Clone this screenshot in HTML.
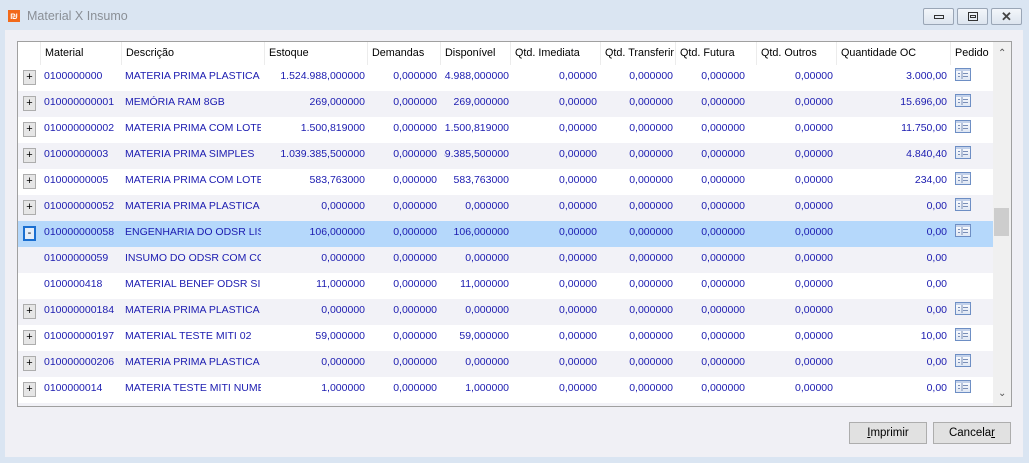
<!DOCTYPE html>
<html><head><meta charset="utf-8"><style>
*{box-sizing:border-box;margin:0;padding:0}
body{width:1029px;height:463px;background:#dae5f2;font-family:"Liberation Sans",sans-serif;font-size:11px;position:relative;overflow:hidden}
.title{position:absolute;left:27px;top:9px;color:#8a8f96;font-size:12.5px}
.logo{position:absolute;left:8px;top:10px;width:12px;height:12px;background:#f26a1b;color:#fff;font-size:9px;line-height:12px;text-align:center;font-weight:bold}
.wb{position:absolute;top:8px;width:31px;height:17px;border:1px solid #9aa6b6;border-radius:2px;background:linear-gradient(#f3f6fa,#dde5ef)}
.client{position:absolute;left:5px;top:30px;width:1018px;height:427px;background:#f0f0f5}
.grid{position:absolute;left:17px;top:41px;width:995px;height:366px;border:1px solid #a0a0a0;background:#fff;overflow:hidden}
.hd{position:absolute;top:0;height:23px;line-height:22px;color:#000;padding-left:4px;border-left:1px solid #ececec;white-space:nowrap;font-size:10.8px}
.row{position:absolute;left:0;width:975px;height:26px}
.c{position:absolute;top:0;height:26px;line-height:23px;color:#1b1bb0;white-space:nowrap;overflow:hidden;font-size:10.5px}
.r{display:flex;justify-content:flex-end}
.pb{position:absolute;left:5px;top:5px;width:13px;height:15px;background:#e6e6e6;border:1px solid #adadad;color:#000;text-align:center;line-height:12px;font-size:11px}
.ic{position:absolute;left:937px;top:3px}
.sb{position:absolute;left:975px;top:0;width:19px;height:364px;background:#f0f0f0}
.btn{position:absolute;top:422px;width:78px;height:22px;border:1px solid #adadad;background:#e1e1e1;text-align:center;line-height:20px;font-size:11.5px}
</style></head><body>
<div class="logo">₪</div><div class="title">Material X Insumo</div>
<div class="wb" style="left:923px"><div style="position:absolute;left:10px;top:6px;width:10px;height:4px;border:1px solid #333"></div></div>
<div class="wb" style="left:957px"><div style="position:absolute;left:10px;top:3px;width:10px;height:9px;border:1px solid #333"></div><div style="position:absolute;left:12px;top:6px;width:6px;height:3px;border:1px solid #333"></div></div>
<div class="wb" style="left:991px;text-align:center;line-height:15px;font-size:13px;font-weight:bold;color:#444">✕</div>
<div class="client"></div>
<div class="grid">
<div class="hd" style="left:22px">Material</div>
<div class="hd" style="left:103px">Descrição</div>
<div class="hd" style="left:246px">Estoque</div>
<div class="hd" style="left:349px">Demandas</div>
<div class="hd" style="left:422px">Disponível</div>
<div class="hd" style="left:492px">Qtd. Imediata</div>
<div class="hd" style="left:582px">Qtd. Transferir</div>
<div class="hd" style="left:657px">Qtd. Futura</div>
<div class="hd" style="left:738px">Qtd. Outros</div>
<div class="hd" style="left:818px">Quantidade OC</div>
<div class="hd" style="left:932px">Pedido</div>
<div id="rows"></div>
<div class="sb"><div style="position:absolute;left:5px;top:6px;font-size:10px;color:#555">⌃</div><div style="position:absolute;left:1px;top:166px;width:15px;height:28px;background:#cdcdcd"></div><div style="position:absolute;left:5px;top:346px;font-size:10px;color:#555">⌄</div></div>
</div>
<div class="btn" style="left:849px"><u>I</u>mprimir</div>
<div class="btn" style="left:933px">Cancela<u>r</u></div>
<script>
var d=[
["+","0100000000","MATERIA PRIMA PLASTICA","1.524.988,000000","1.524.988,000000","3.000,00",1],
["+","010000000001","MEMÓRIA RAM 8GB","269,000000","269,000000","15.696,00",1],
["+","010000000002","MATERIA PRIMA COM LOTE","1.500,819000","1.500,819000","11.750,00",1],
["+","01000000003","MATERIA PRIMA SIMPLES","1.039.385,500000","1.039.385,500000","4.840,40",1],
["+","01000000005","MATERIA PRIMA COM LOTE","583,763000","583,763000","234,00",1],
["+","010000000052","MATERIA PRIMA PLASTICA I","0,000000","0,000000","0,00",1],
["-","010000000058","ENGENHARIA DO ODSR LISTA","106,000000","106,000000","0,00",1],
["","01000000059","INSUMO DO ODSR COM CONTROLE","0,000000","0,000000","0,00",0],
["","0100000418","MATERIAL BENEF ODSR SIMPLES","11,000000","11,000000","0,00",0],
["+","010000000184","MATERIA PRIMA PLASTICA 5","0,000000","0,000000","0,00",1],
["+","010000000197"," MATERIAL TESTE MITI 02","59,000000","59,000000","10,00",1],
["+","010000000206","MATERIA PRIMA PLASTICA","0,000000","0,000000","0,00",1],
["+","0100000014","MATERIA TESTE MITI NUMERO","1,000000","1,000000","0,00",1],
["+","01000000","X","0,000000","0,000000","0,00",1]];
var icon='<svg class="ic" width="16" height="13" viewBox="0 0 16 13"><defs><linearGradient id="g" x1="0" y1="0" x2="0" y2="1"><stop offset="0" stop-color="#fff"/><stop offset="1" stop-color="#dde6f3"/></linearGradient></defs><rect x="0.5" y="0.5" width="15" height="12" fill="url(#g)" stroke="#6d8ec4"/><line x1="0.5" y1="2" x2="15.5" y2="2" stroke="#8aa6d6"/><path d="M3 5.5h2M3 8.5h2M7 3v8M8 5.5h5M8 8.5h5" stroke="#7a8fb8" fill="none"/></svg>';
var h="";
d.forEach(function(r,i){
var bg=i==6?"#b5d8fb":(i%2?"#f2f2f7":"#fff");
h+='<div class="row" style="top:'+(23+i*26)+'px;background:'+bg+'">';
if(r[0])h+='<div class="pb" style="'+(i==6?'border:2px solid #1a6fd1;background:#e6eef8;line-height:11px':'')+'">'+r[0]+'</div>';
h+='<div class="c" style="left:26px;width:78px">'+r[1]+'</div>';
h+='<div class="c" style="left:107px;width:136px">'+r[2]+'</div>';
function R(l,w,t){return '<div class="c r" style="left:'+l+'px;width:'+w+'px">'+t+'</div>';}
h+=R(250,97,r[3])+R(350,69,"0,000000")+R(426,65,r[4])+R(494,85,"0,00000")+R(584,71,"0,000000")+R(659,68,"0,000000")+R(740,75,"0,00000")+R(820,109,r[5]);
if(r[6])h+=icon;
h+='</div>';});
document.getElementById("rows").innerHTML=h;
</script>
</body></html>
